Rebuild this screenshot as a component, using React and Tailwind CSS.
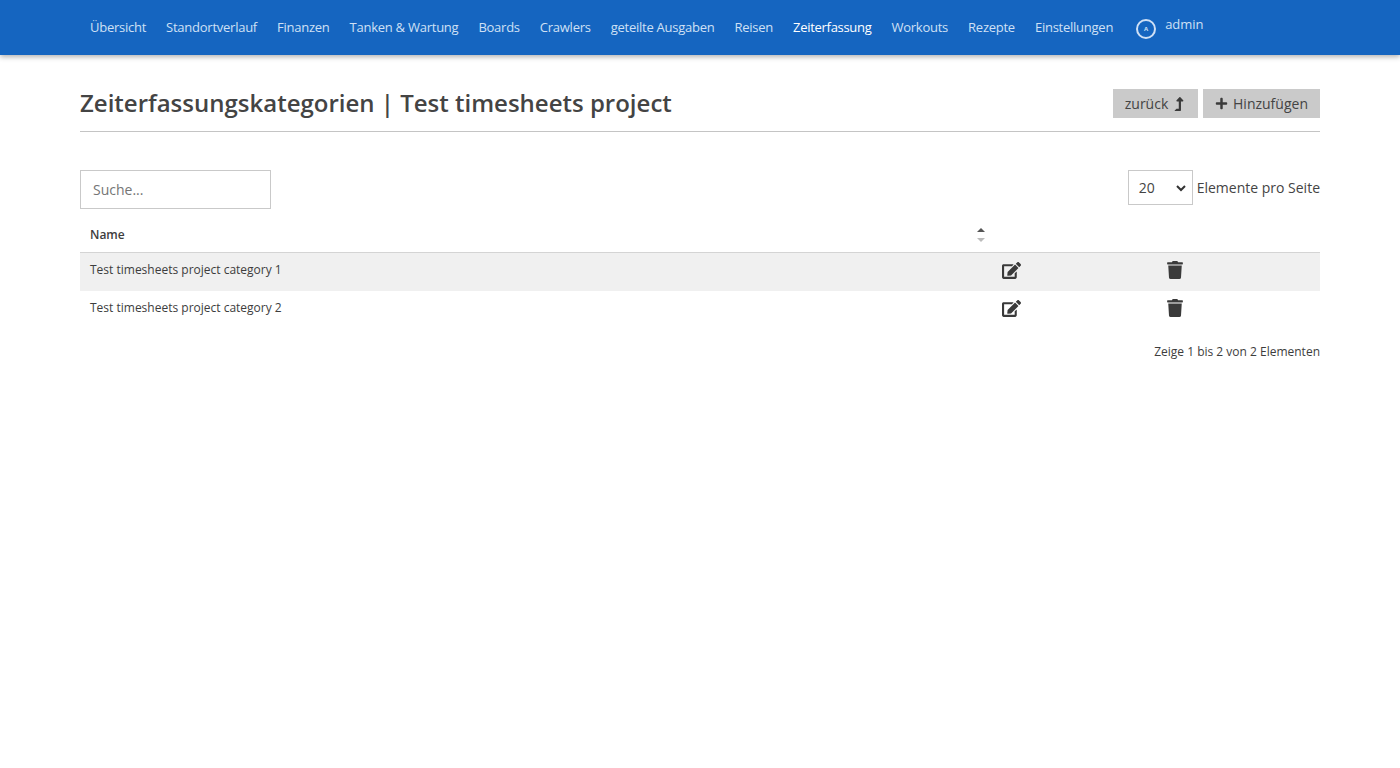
import React from "react";
import { FaEdit, FaTrash, FaPlus, FaLevelUpAlt } from "react-icons/fa";

const nav = [
  ["Übersicht", false], ["Standortverlauf", false], ["Finanzen", false], ["Tanken & Wartung", false],
  ["Boards", false], ["Crawlers", false], ["geteilte Ausgaben", false], ["Reisen", false],
  ["Zeiterfassung", true], ["Workouts", false], ["Rezepte", false], ["Einstellungen", false],
];

function Row({ name, shaded }) {
  return (
    <div className={`flex h-[38px] items-center pb-[4px] ${shaded ? "bg-[#f0f0f0]" : "bg-white"}`}>
      <div className="w-[910px] pl-2.5 text-[12px] text-[#3d3d3d]">{name}</div>
      <div className="w-[165px] pl-[11.500px] text-[#3a3a3a]"><FaEdit className="text-[19px]" /></div>
      <div className="w-[165px] pl-[11px] text-[#3a3a3a]"><FaTrash className="text-[18px]" /></div>
    </div>
  );
}

export default function App() {
  return (
    <div className="min-h-[768px] bg-white font-['Open_Sans',sans-serif] text-[#3d3d3d]">
      <header className="h-[55px] bg-[#1565c0] px-[80px] shadow-[0_2px_5px_rgba(0,0,0,0.3)]">
        <nav className="flex items-start">
          {nav.map(([label, active]) => (
            <a key={label} className={`whitespace-nowrap px-2.5 pt-[18px] text-[13px] leading-[18px] ${active ? "font-medium tracking-[-0.3px] text-white" : "tracking-[-0.25px] text-[#cfe0f5]"}`}>{label}</a>
          ))}
          <div className="ml-[13px] mt-[19px] flex h-5 w-5 items-center justify-center rounded-full border-2 border-[#cfe0f5] text-[6px] font-bold text-[#cfe0f5]">A</div>
          <span className="ml-[9px] pt-[15px] text-[13px] leading-[18px] text-[#cfe0f5]">admin</span>
        </nav>
      </header>

      <main className="px-[80px]">
        <div className="flex h-[77px] items-end justify-between border-b border-[#c4c4c4] pb-[12px]">
          <h1 className="text-[24px] font-semibold leading-[33px] text-[#444]">Zeiterfassungskategorien | Test timesheets project</h1>
          <div className="mb-[1px] flex gap-[5px]">
            <button className="flex h-[29px] w-[85px] items-center justify-center gap-[4px] bg-[#cacaca] text-[14px] text-[#444]">zurück <FaLevelUpAlt className="text-[14px] text-[#3a3a3a]" /></button>
            <button className="flex h-[29px] w-[117px] items-center justify-center gap-[5px] bg-[#cacaca] text-[14px] text-[#444]"><FaPlus className="text-[13px] text-[#3a3a3a]" /> Hinzufügen</button>
          </div>
        </div>

        <div className="mt-[38px] flex items-start justify-between">
          <input readOnly placeholder="Suche..." className="h-[39px] w-[191px] border border-[#c9c9c9] px-3 text-[14px] outline-none placeholder:text-[#757575]" />
          <div className="flex items-center gap-1 text-[14px] text-[#444]">
            <div className="flex h-[35px] w-[65px] items-center justify-between border border-[#c9c9c9] pl-2.5 pr-[5px]">
              <span>20</span>
              <svg width="12" height="12" viewBox="0 0 12 12" fill="none" stroke="#333" strokeWidth="2"><path d="M2 4 6 8l4-4" /></svg>
            </div>
            <span>Elemente pro Seite</span>
          </div>
        </div>

        <div className="mt-[7px] flex h-[37px] items-center border-b border-[#d4d4d4]">
          <div className="flex w-[905px] items-center justify-between pl-2.5 pt-[1px] text-[12px] font-semibold">
            <span>Name</span>
            <svg width="8" height="16" viewBox="0 0 8 16"><path d="M4 1 8 5H0z" fill="#555" /><path d="M4 15 0 11h8z" fill="#bbb" /></svg>
          </div>
        </div>
        <Row name="Test timesheets project category 1" shaded />
        <Row name="Test timesheets project category 2" />
        <div className="mt-[14px] text-right text-[12px] leading-[18px]">Zeige 1 bis 2 von 2 Elementen</div>
      </main>
    </div>
  );
}
